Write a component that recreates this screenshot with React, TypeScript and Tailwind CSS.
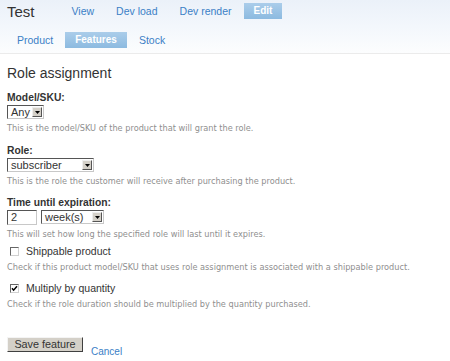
import React from "react";

const arial = "font-['Liberation_Sans',Arial,sans-serif]";
const verdana = "font-['DejaVu_Sans',Verdana,sans-serif]";

function Select({ value, width }: { value: string; width: string }) {
  return (
    <div className={`flex h-[14px] ${width} items-center justify-between border border-[#c8c8c8] border-t-[#555] border-l-[#555] bg-white pl-[3px] pr-[1px]`}>
      <span className="text-[11px] leading-none text-[#333]">{value}</span>
      <span className="flex h-[10px] w-[10px] items-center justify-center border border-[#eee] border-r-[#555] border-b-[#555] bg-[#d4d0c8]">
        <svg width="5" height="3" viewBox="0 0 5 3">
          <path d="M0 0h5L2.5 3z" fill="#000" />
        </svg>
      </span>
    </div>
  );
}

function Checkbox({ checked }: { checked?: boolean }) {
  return (
    <span className="flex h-[9px] w-[9px] shrink-0 items-center justify-center border border-[#666] border-r-[#d0d0d0] border-b-[#d0d0d0] bg-white">
      {checked && (
        <svg width="7" height="7" viewBox="0 0 7 7">
          <path d="M1 3.3l1.6 1.9L6 1.2" stroke="#000" strokeWidth="1.5" fill="none" />
        </svg>
      )}
    </span>
  );
}

function Desc({ children }: { children: React.ReactNode }) {
  return <div className={`mt-[4px] ${verdana} text-[8.2px] leading-[10px] text-[#8f8f8f]`}>{children}</div>;
}

function Tab({ label, active }: { label: string; active?: boolean }) {
  return (
    <span
      className={`px-[10px] py-[2px] leading-[12px] ${
        active
          ? "bg-gradient-to-b from-[#abcdea] to-[#8cbae0] text-[10px] font-bold text-white"
          : "text-[10.5px] text-[#3b80c6]"
      }`}
    >
      {label}
    </span>
  );
}

export default function App() {
  return (
    <div className={`h-[361px] w-[450px] overflow-hidden bg-white ${arial}`}>
      {/* Header tabs */}
      <div className="h-[54px] border-b border-[#ebebeb] bg-gradient-to-b from-[#ebf1f9] via-[#f3f7fc] to-[#fcfdfe]">
        <div className="flex h-[22px] items-center pl-[7px]">
          <span className="text-[15px] leading-none text-[#333]">Test</span>
          <div className="ml-[27px] flex items-center gap-[2px]">
            <Tab label="View" />
            <Tab label="Dev load" />
            <Tab label="Dev render" />
            <Tab label="Edit" active />
          </div>
        </div>
        <div className="mt-[10px] flex items-center gap-[2px] pl-[7px]">
          <Tab label="Product" />
          <Tab label="Features" active />
          <Tab label="Stock" />
        </div>
      </div>

      <div className="px-[7px] text-[#333]">
        <h1 className="mt-[10px] text-[14px] leading-[18px]">Role assignment</h1>

        <div className="mt-[10px]">
          <div className="text-[10.3px] font-bold leading-[12px]">Model/SKU:</div>
          <div className="mt-[1px]"><Select value="Any" width="w-[37px]" /></div>
          <Desc>This is the model/SKU of the product that will grant the role.</Desc>
        </div>

        <div className="mt-[12px]">
          <div className="text-[10.3px] font-bold leading-[12px]">Role:</div>
          <div className="mt-[1px]"><Select value="subscriber" width="w-[87px]" /></div>
          <Desc>This is the role the customer will receive after purchasing the product.</Desc>
        </div>

        <div className="mt-[11px]">
          <div className="text-[10.3px] font-bold leading-[12px]">Time until expiration:</div>
          <div className="mt-[1px] flex gap-[4px]">
            <div className="flex h-[15px] w-[30px] items-center border border-[#c8c8c8] border-t-[#555] border-l-[#555] bg-white pl-[3px] text-[11px] leading-none">2</div>
            <Select value="week(s)" width="w-[63px]" />
          </div>
          <Desc>This will set how long the specified role will last until it expires.</Desc>
        </div>

        <div className="mt-[6px]">
          <div className="flex items-center gap-[7px] pl-[3px] text-[10.5px] leading-[13px]">
            <Checkbox />
            <span>Shippable product</span>
          </div>
          <Desc>Check if this product model/SKU that uses role assignment is associated with a shippable product.</Desc>
        </div>

        <div className="mt-[10px]">
          <div className="flex items-center gap-[7px] pl-[3px] text-[10.5px] leading-[13px]">
            <Checkbox checked />
            <span>Multiply by quantity</span>
          </div>
          <Desc>Check if the role duration should be multiplied by the quantity purchased.</Desc>
        </div>

        <div className="mt-[28px] flex items-start gap-[8px]">
          <button className="h-[15px] w-[76px] border border-[#f4f4f4] border-r-[#404040] border-b-[#404040] bg-[#d4d0c8] text-[10.8px] leading-none text-[#333]">
            Save feature
          </button>
          <span className="mt-[9px] text-[10px] leading-[12px] text-[#3b80c6]">Cancel</span>
        </div>
      </div>
    </div>
  );
}
